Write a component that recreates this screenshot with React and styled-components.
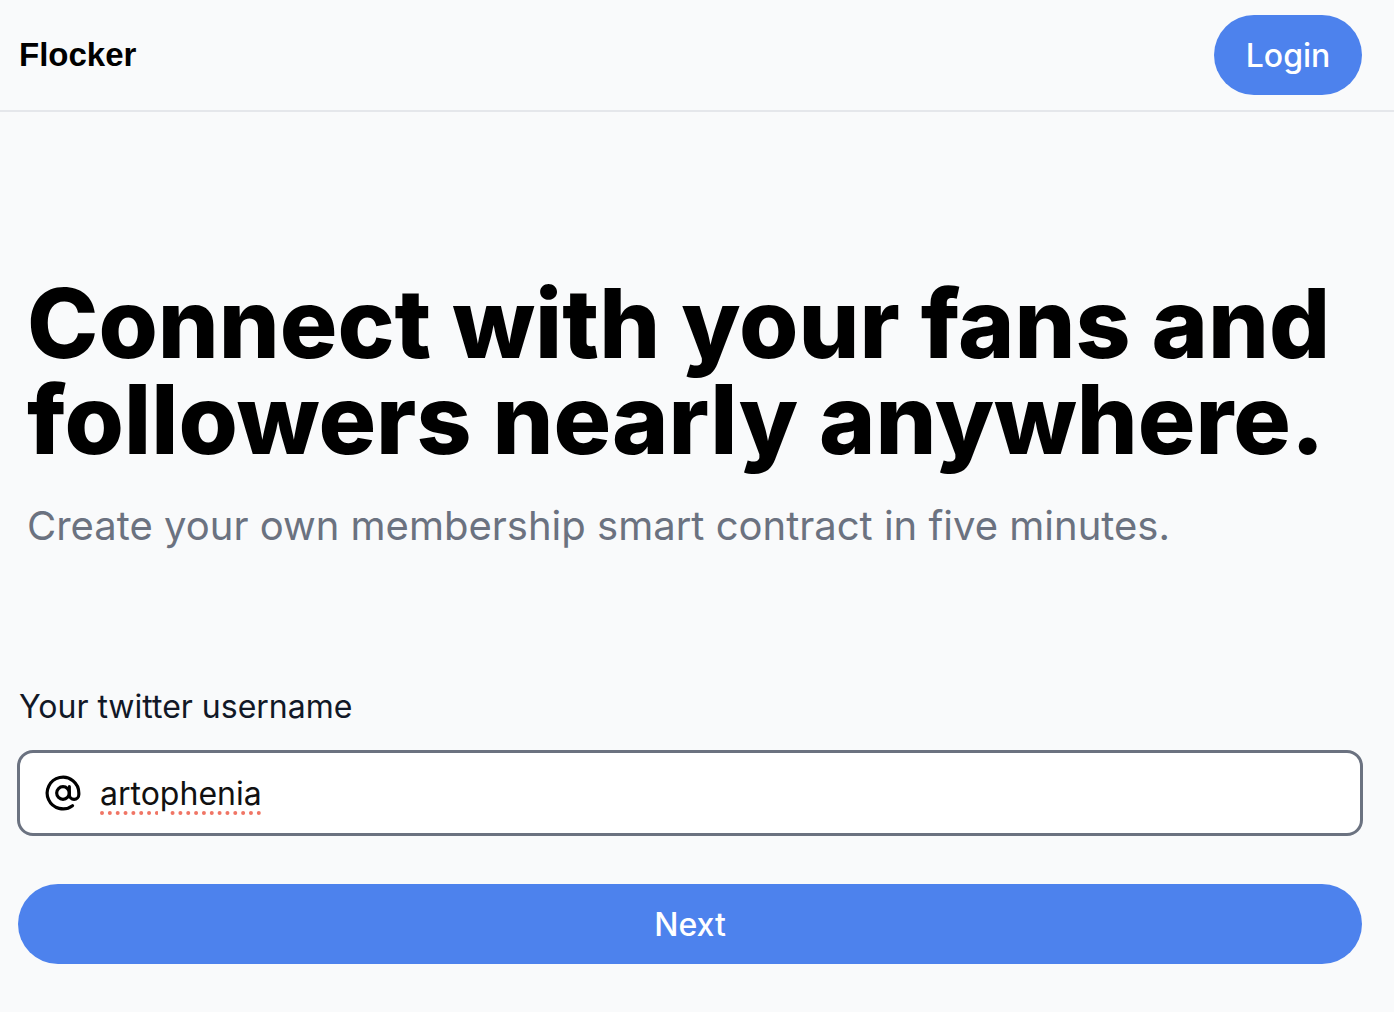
import React from 'react';
import styled, { createGlobalStyle } from 'styled-components';
import { AtSign } from 'lucide-react';

const GlobalStyle = createGlobalStyle`
  html, body {
    margin: 0;
    padding: 0;
    background: #f9fafb;
    font-family: Inter, "Noto Sans", sans-serif;
    color: #000;
  }
`;

const Page = styled.div`
  min-height: 100vh;
  background: #f9fafb;
`;

const Header = styled.header`
  height: 110px;
  display: flex;
  align-items: center;
  justify-content: space-between;
  padding: 0 32px 0 19px;
  border-bottom: 2px solid #e5e7eb;
`;

const Logo = styled.div`
  font-family: "Liberation Sans", Arial, sans-serif;
  font-weight: 700;
  font-size: 33px;
`;

const PillButton = styled.button`
  border: none;
  background: #4d82ed;
  color: #fff;
  font-family: Inter, sans-serif;
  font-weight: 500;
  font-size: 32px;
  height: 80px;
  border-radius: 40px;
  cursor: pointer;
  width: ${p => (p.$wide ? '100%' : '148px')};
`;

const Main = styled.main`
  padding: 0 31px 0 17px;
`;

const Hero = styled.section`
  padding: 163px 0 0 10px;
`;

const Title = styled.h1`
  margin: 0;
  font-size: 96px;
  line-height: 96px;
  font-weight: 800;
`;

const Subtitle = styled.p`
  margin: 35px 0 0;
  font-size: 40px;
  line-height: 48px;
  color: #6b7280;
`;

const Form = styled.form`
  margin-top: 137px;
  display: flex;
  flex-direction: column;
`;

const Label = styled.label`
  font-size: 32px;
  line-height: 40px;
  color: #111827;
  margin-left: 2px;
`;

const Field = styled.div`
  margin-top: 23px;
  height: 80px;
  border: 3px solid #6b7280;
  border-radius: 16px;
  background: #fff;
  display: flex;
  align-items: center;
  gap: 18px;
  padding: 0 24px;
`;

const Value = styled.span`
  font-size: 32px;
  color: #111;
  text-decoration-line: underline;
  text-decoration-style: dotted;
  text-decoration-color: #f07565;
  text-decoration-thickness: 4px;
  text-underline-offset: 7px;
`;

const Submit = styled.div`
  margin: 48px 1px 0;
`;

export default function App() {
  return (
    <Page>
      <GlobalStyle />
      <Header>
        <Logo>Flocker</Logo>
        <PillButton type="button">Login</PillButton>
      </Header>
      <Main>
        <Hero>
          <Title>
            Connect with your fans and
            <br />
            followers nearly anywhere.
          </Title>
          <Subtitle>Create your own membership smart contract in five minutes.</Subtitle>
        </Hero>
        <Form onSubmit={e => e.preventDefault()}>
          <Label>Your twitter username</Label>
          <Field>
            <AtSign size={38} strokeWidth={2} color="#000" />
            <Value>artophenia</Value>
          </Field>
          <Submit>
            <PillButton type="submit" $wide>Next</PillButton>
          </Submit>
        </Form>
      </Main>
    </Page>
  );
}
